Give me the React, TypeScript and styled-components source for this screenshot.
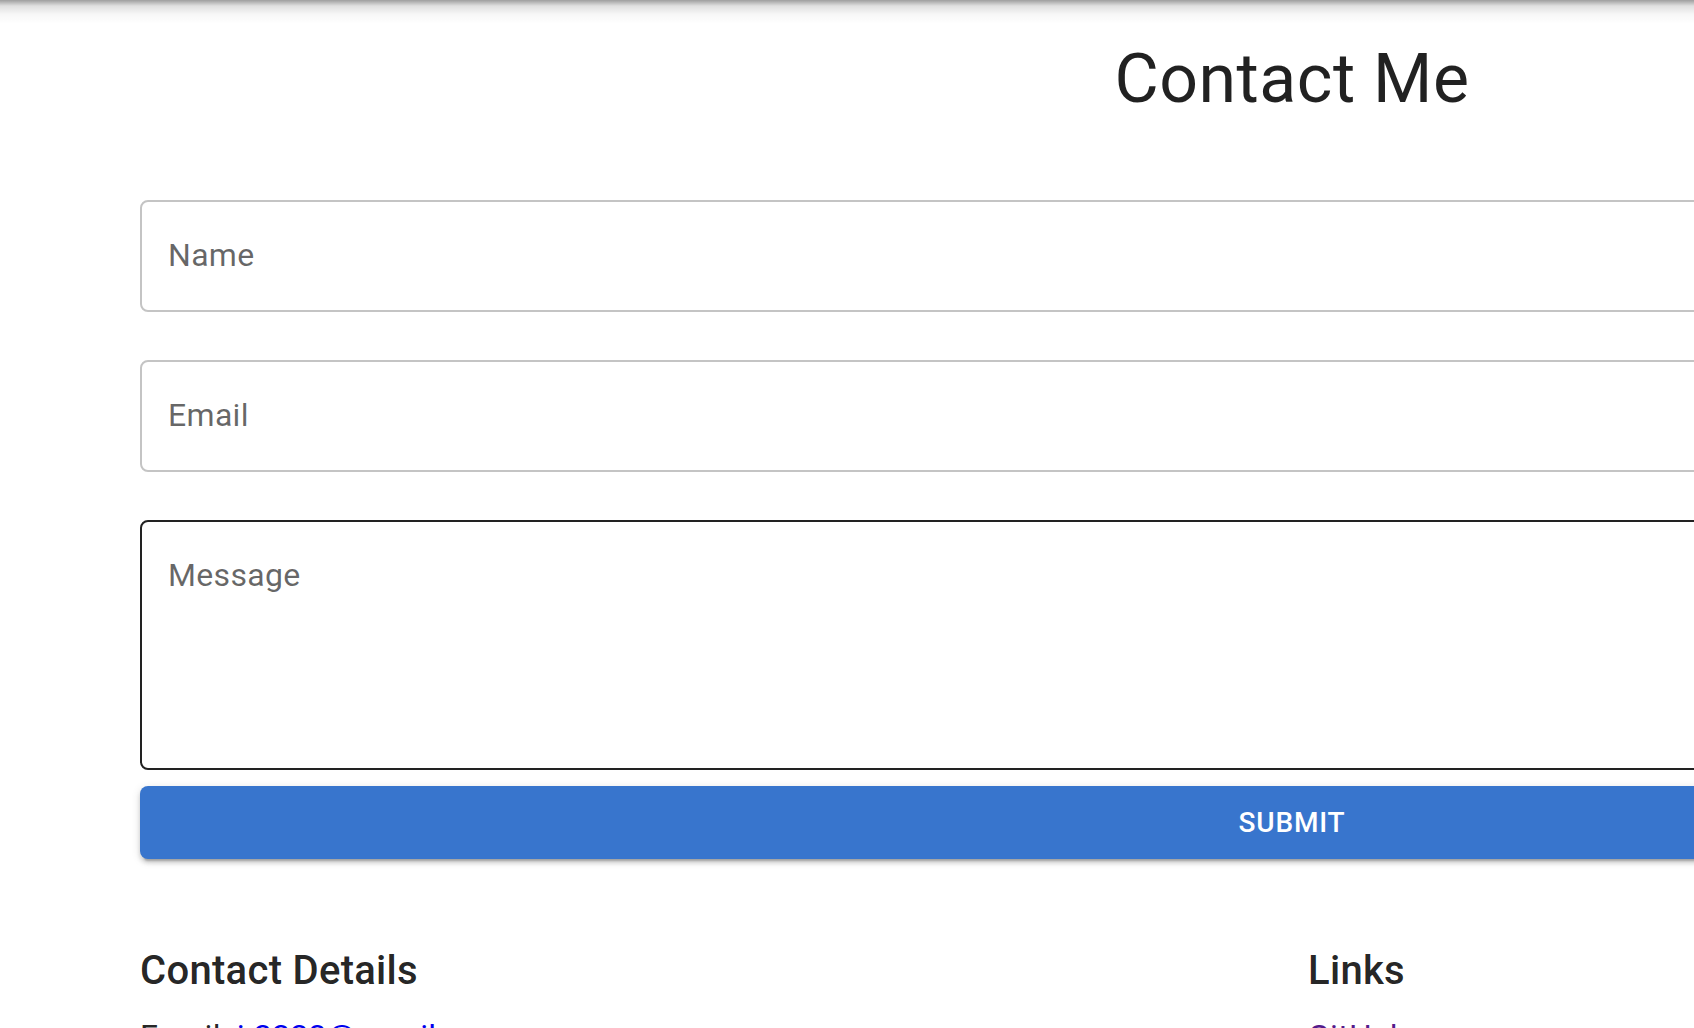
import styled, { createGlobalStyle } from "styled-components";

const GlobalStyle = createGlobalStyle`
  html, body {
    margin: 0;
    padding: 0;
    overflow: hidden;
    background: #fff;
    font-family: Roboto, "Liberation Sans", sans-serif;
    color: rgba(0, 0, 0, 0.87);
  }
`;

const Page = styled.div`
  width: 2584px;
  position: relative;
`;

const TopShade = styled.div`
  height: 24px;
  background: linear-gradient(
    to bottom,
    rgba(0, 0, 0, 0.38) 0%,
    rgba(0, 0, 0, 0.12) 25%,
    rgba(0, 0, 0, 0.03) 60%,
    rgba(0, 0, 0, 0) 100%
  );
`;

const Container = styled.main`
  max-width: 2400px;
  margin: 0 auto;
  padding: 14px 48px 0;
  box-sizing: border-box;
`;

const Title = styled.h1`
  margin: 0 0 46px;
  text-align: center;
  font-weight: 400;
  font-size: 68px;
  line-height: 1.235;
  letter-spacing: 0.00735em;
  color: rgba(0, 0, 0, 0.87);
`;

const Form = styled.form`
  display: flex;
  flex-direction: column;
`;

const Field = styled.label<{ $multiline?: boolean; $active?: boolean }>`
  display: block;
  box-sizing: border-box;
  margin: 32px 0 16px;
  height: ${(p) => (p.$multiline ? "250px" : "112px")};
  border: 2px solid ${(p) => (p.$active ? "#222" : "#c4c4c4")};
  border-radius: 8px;
  padding: 30px 26px;
`;

const Placeholder = styled.span`
  display: block;
  font-size: 32px;
  line-height: 46px;
  color: rgba(0, 0, 0, 0.6);
  letter-spacing: 0.01em;
`;

const SubmitButton = styled.button`
  height: 73px;
  border: none;
  border-radius: 8px;
  background: #3875cd;
  color: #fff;
  font-family: Roboto, "Liberation Sans", sans-serif;
  font-weight: 500;
  font-size: 28px;
  letter-spacing: 0.02857em;
  text-transform: uppercase;
  cursor: pointer;
  box-shadow: 0 6px 2px -4px rgba(0, 0, 0, 0.2), 0 4px 4px 0 rgba(0, 0, 0, 0.14),
    0 2px 10px 0 rgba(0, 0, 0, 0.12);
`;

const Footer = styled.section`
  display: grid;
  grid-template-columns: 1fr 1fr;
  column-gap: 32px;
  margin-top: 80px;
`;

const Column = styled.div`
  display: flex;
  flex-direction: column;
  gap: 9px;
`;

const Heading = styled.h6`
  margin: 0;
  font-size: 40px;
  font-weight: 500;
  line-height: 1.6;
  letter-spacing: 0.0075em;
`;

const Line = styled.p`
  margin: 0;
  font-size: 32px;
  line-height: 1.5;
  letter-spacing: 0.00938em;
`;

const Link = styled.a<{ $visited?: boolean }>`
  color: ${(p) => (p.$visited ? "#551a8b" : "#0000ee")};
  text-decoration: underline;
`;

export default function App() {
  return (
    <Page>
      <GlobalStyle />
      <TopShade />
      <Container>
        <Title>Contact Me</Title>
        <Form onSubmit={(e) => e.preventDefault()}>
          <Field>
            <Placeholder>Name</Placeholder>
          </Field>
          <Field>
            <Placeholder>Email</Placeholder>
          </Field>
          <Field $multiline $active>
            <Placeholder>Message</Placeholder>
          </Field>
          <SubmitButton type="submit">Submit</SubmitButton>
        </Form>
        <Footer>
          <Column>
            <Heading>Contact Details</Heading>
            <Line>
              Email: <Link href="#">j.2223@gmail.com</Link>
            </Line>
          </Column>
          <Column>
            <Heading>Links</Heading>
            <Line>
              <Link href="#" $visited>
                GitHub
              </Link>
            </Line>
          </Column>
        </Footer>
      </Container>
    </Page>
  );
}
